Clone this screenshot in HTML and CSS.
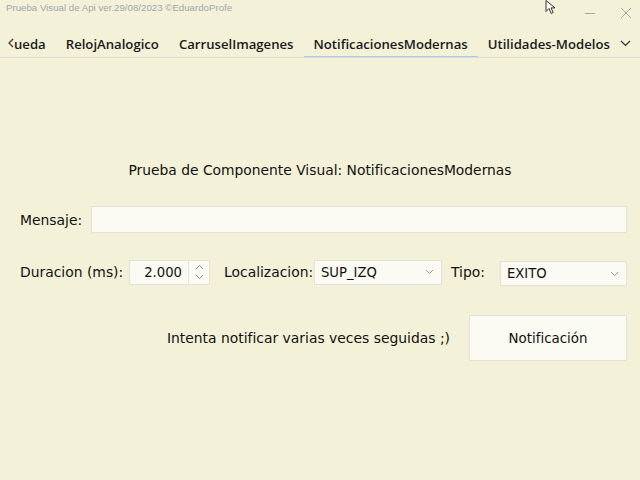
FILE: index.html
```html
<!DOCTYPE html>
<html lang="es">
<head>
<meta charset="utf-8">
<title>Prueba Visual de Api</title>
<link rel="stylesheet" href="styles.css">
</head>
<body>
<div class="window">
  <div class="titlebar">
    <span class="title">Prueba Visual de Api ver.29/08/2023 ©EduardoProfe</span>
    <div class="winbtns">
      <svg class="wb" width="12" height="12" viewBox="0 0 12 12"><path d="M1 6.5h10" stroke="#a8a8a8" stroke-width="1"/></svg>
      <svg class="wb" width="12" height="12" viewBox="0 0 12 12"><path d="M1 1l10 10M11 1L1 11" stroke="#a8a8a8" stroke-width="1"/></svg>
    </div>
  </div>
  <div class="tabs">
    <svg class="chev-left" width="6" height="10" viewBox="0 0 6 10"><path d="M5 1L1 5l4 4" fill="none" stroke="#333" stroke-width="1.2"/></svg>
    <span class="tab tab-cut">ueda</span>
    <span class="tab">RelojAnalogico</span>
    <span class="tab">CarruselImagenes</span>
    <span class="tab active">NotificacionesModernas</span>
    <span class="tab tab-last">Utilidades-Modelos</span>
    <svg class="chev-down" width="11" height="7" viewBox="0 0 11 7"><path d="M1 1l4.5 4.5L10 1" fill="none" stroke="#333" stroke-width="1.2"/></svg>
  </div>
  <div class="content">
    <h1 class="heading">Prueba de Componente Visual: NotificacionesModernas</h1>
    <div class="row row-msg">
      <label class="lbl lbl-msg">Mensaje:</label>
      <div class="input"></div>
    </div>
    <div class="row row-opts">
      <label class="lbl lbl-dur">Duracion (ms):</label>
      <div class="spin">
        <span class="spin-val">2.000</span>
        <span class="spin-btns">
          <svg width="9" height="16" viewBox="0 0 9 16"><path d="M1 5l3.5-3.5L8 5M1 11l3.5 3.5L8 11" fill="none" stroke="#8a8a8a" stroke-width="1"/></svg>
        </span>
      </div>
      <label class="lbl lbl-loc">Localizacion:</label>
      <div class="select sel-loc"><span>SUP_IZQ</span>
        <svg width="9" height="6" viewBox="0 0 9 6"><path d="M1 1l3.5 3.5L8 1" fill="none" stroke="#999" stroke-width="1"/></svg>
      </div>
      <label class="lbl lbl-tipo">Tipo:</label>
      <div class="select sel-tipo"><span>EXITO</span>
        <svg width="9" height="6" viewBox="0 0 9 6"><path d="M1 1l3.5 3.5L8 1" fill="none" stroke="#999" stroke-width="1"/></svg>
      </div>
    </div>
    <div class="row row-action">
      <span class="lbl">Intenta notificar varias veces seguidas ;)</span>
      <button class="btn">Notificación</button>
    </div>
  </div>
  <svg class="cursor" width="13" height="14" viewBox="0 0 13 14"><path d="M1 0.5v11l3-3 2.2 5 2-1-2.2-4.6h4z" fill="#fff" stroke="#333" stroke-width="1"/></svg>
</div>
</body>
</html>
```

FILE: styles.css
```css
* { box-sizing: border-box; }
html, body { margin: 0; padding: 0; }
body {
  width: 640px;
  height: 480px;
  overflow: hidden;
  background: #f3f2d8;
}
.window {
  position: relative;
  width: 640px;
  height: 480px;
  display: flex;
  flex-direction: column;
  font-family: "DejaVu Sans", sans-serif;
  color: #111;
}
.titlebar {
  height: 22px;
  flex-shrink: 0;
  display: flex;
  align-items: flex-start;
  justify-content: space-between;
  padding: 2px 8px 0 6px;
}
.title {
  font-family: "Liberation Sans", sans-serif;
  font-size: 9.7px;
  color: #a4a4b0;
  line-height: 12px;
}
.winbtns {
  display: flex;
  flex-shrink: 0;
  gap: 24px;
  padding-top: 5px;
}
.wb { flex-shrink: 0; }
.tabs {
  height: 36px;
  flex-shrink: 0;
  display: flex;
  align-items: flex-end;
  border-bottom: 1px solid #dcdcd4;
  padding: 0 9px 0 8px;
  font-family: "Open Sans", sans-serif;
  font-weight: 600;
  font-size: 13.15px;
  color: #1a1a1a;
  white-space: nowrap;
  overflow: hidden;
}
.chev-left { flex-shrink: 0; margin: 0 0 9px 0; }
.tab {
  flex-shrink: 0;
  height: 26px;
  line-height: 26px;
  margin-right: 20px;
  position: relative;
}
.tab-last { margin-right: 0; }
.tab.active::after {
  content: "";
  position: absolute;
  left: -10px;
  right: -10px;
  bottom: -1px;
  height: 2px;
  background: #a9cbe6;
}
.chev-down { flex-shrink: 0; margin: 0 0 10px auto; }
.content {
  flex: 1;
  display: flex;
  flex-direction: column;
  padding: 0 13px 0 20px;
  font-size: 13.9px;
}
.heading {
  margin: 102px -13px 0 -20px;
  font-size: 13.85px;
  font-weight: normal;
  line-height: 20px;
  text-align: center;
}
.row {
  display: flex;
  align-items: center;
}
.lbl { flex-shrink: 0; white-space: nowrap; }
.row-msg {
  margin-top: 26px;
  height: 27px;
}
.lbl-msg { width: 71px; }
.input {
  flex: 1;
  height: 27px;
  background: #fbfbf3;
  border: 1px solid #e2e2da;
}
.row-opts {
  margin-top: 26px;
  height: 26px;
}
.lbl-dur { width: 109px; }
.spin {
  flex-shrink: 0;
  width: 81px;
  height: 25px;
  display: flex;
  align-items: center;
  background: #fbfbf3;
  border: 1px solid #e2e2da;
}
.spin-val {
  width: 52px;
  text-align: right;
  font-size: 13.2px;
}
.spin-btns {
  margin-left: 6px;
  width: 21px;
  height: 23px;
  border-left: 1px solid #e6e6de;
  display: flex;
  align-items: center;
  justify-content: center;
}
.lbl-loc { margin-left: 14px; width: 90px; }
.select {
  height: 25px;
  display: flex;
  align-items: center;
  justify-content: space-between;
  padding: 0 7px 0 6px;
  background: #fbfbf3;
  border: 1px solid #e2e2da;
  font-family: "DejaVu Sans", sans-serif;
  font-size: 13.2px;
}
.sel-loc { width: 128px; flex-shrink: 0; }
.lbl-tipo { margin-left: 9px; width: 49px; }
.sel-tipo { flex: 1; margin-top: 3px; }
.row-action {
  margin-top: 30px;
  height: 46px;
  justify-content: flex-end;
}
.btn {
  margin-left: 19px;
  width: 158px;
  height: 46px;
  background: #fbfbf3;
  border: 1px solid #e2e2da;
  font-family: "DejaVu Sans", sans-serif;
  font-size: 13.4px;
  color: #111;
}
.cursor {
  position: absolute;
  left: 545px;
  top: 0;
}
```
